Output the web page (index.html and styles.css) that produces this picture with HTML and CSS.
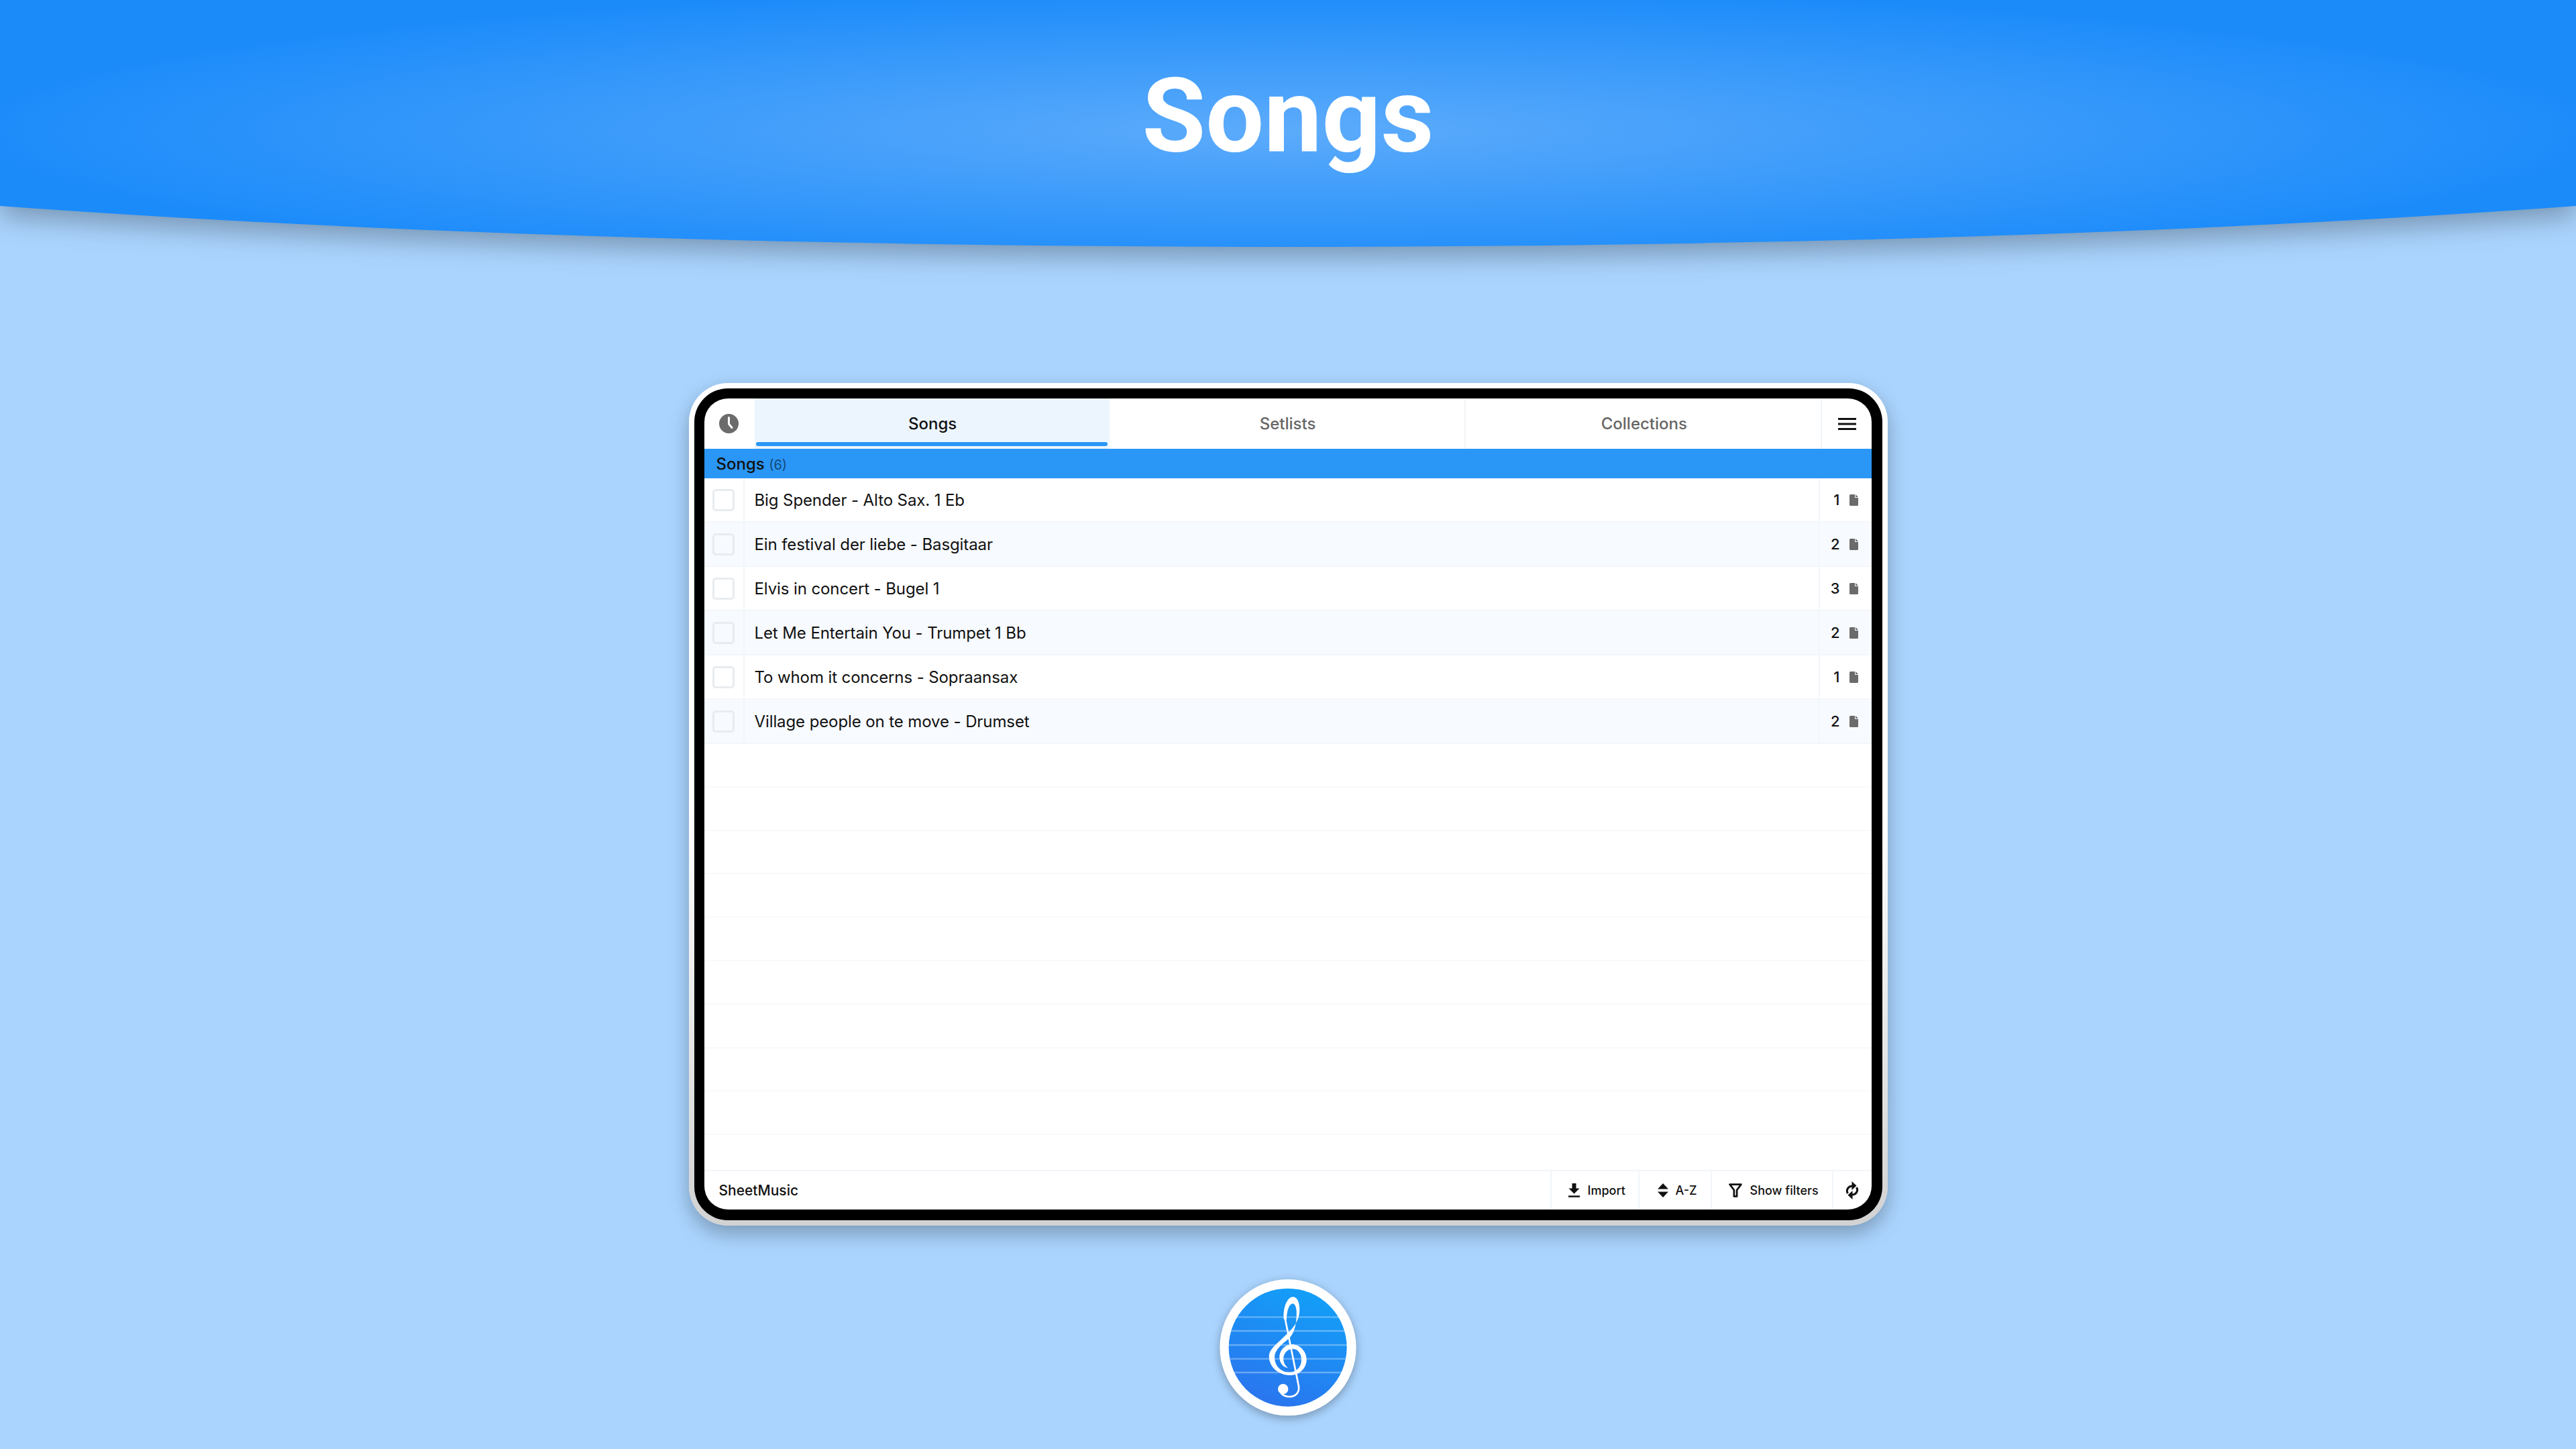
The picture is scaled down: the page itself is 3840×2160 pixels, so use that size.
FILE: index.html
```html
<!DOCTYPE html>
<html lang="en">
<head>
    <meta charset="UTF-8">
    <title>Songs</title>
    <link rel="stylesheet" href="styles.css">
</head>
<body>
    <svg class="sprites">
        <symbol id="file" viewBox="0 0 13 17"><path d="M1.5 0h6.500v5h5v10.500a1.500 1.500 0 0 1-1.500 1.500h-10a1.500 1.500 0 0 1-1.500-1.500v-14a1.500 1.500 0 0 1 1.500-1.500zM9 0l4 4h-4z"/></symbol>
    </svg>

    <header class="banner">
        <h1>Songs</h1>
    </header>

    <div class="tablet">
        <div class="bezel">
            <div class="screen">
                <nav class="tabs">
                    <div class="tab-clock">
                        <svg class="icon-clock" viewBox="0 0 29 29"><circle cx="14.500" cy="14.500" r="14.500" fill="#6b6b6b"/><path d="M14.500 5.500v9.500l4.500 5.500" fill="none" stroke="#fff" stroke-width="3" stroke-linecap="round" stroke-linejoin="round"/></svg>
                    </div>
                    <div class="tab active">Songs</div>
                    <div class="tab">Setlists</div>
                    <div class="tab">Collections</div>
                    <div class="tab-menu">
                        <svg class="icon-menu" viewBox="0 0 27 18"><path d="M0 1.500h27M0 9h27M0 16.500h27" stroke="#111" stroke-width="3"/></svg>
                    </div>
                </nav>

                <div class="band">Songs <span class="band-count">(6)</span></div>

                <div class="list">
                    <div class="row">
                        <div class="row-check"><span class="checkbox"></span></div>
                        <div class="row-name">Big Spender - Alto Sax. 1 Eb</div>
                        <div class="row-count">1 <svg class="icon-file"><use href="#file"/></svg></div>
                    </div>
                    <div class="row">
                        <div class="row-check"><span class="checkbox"></span></div>
                        <div class="row-name">Ein festival der liebe - Basgitaar</div>
                        <div class="row-count">2 <svg class="icon-file"><use href="#file"/></svg></div>
                    </div>
                    <div class="row">
                        <div class="row-check"><span class="checkbox"></span></div>
                        <div class="row-name">Elvis in concert - Bugel 1</div>
                        <div class="row-count">3 <svg class="icon-file"><use href="#file"/></svg></div>
                    </div>
                    <div class="row">
                        <div class="row-check"><span class="checkbox"></span></div>
                        <div class="row-name">Let Me Entertain You - Trumpet 1 Bb</div>
                        <div class="row-count">2 <svg class="icon-file"><use href="#file"/></svg></div>
                    </div>
                    <div class="row">
                        <div class="row-check"><span class="checkbox"></span></div>
                        <div class="row-name">To whom it concerns - Sopraansax</div>
                        <div class="row-count">1 <svg class="icon-file"><use href="#file"/></svg></div>
                    </div>
                    <div class="row">
                        <div class="row-check"><span class="checkbox"></span></div>
                        <div class="row-name">Village people on te move - Drumset</div>
                        <div class="row-count">2 <svg class="icon-file"><use href="#file"/></svg></div>
                    </div>
                    <div class="row-empty"></div>
                    <div class="row-empty"></div>
                    <div class="row-empty"></div>
                    <div class="row-empty"></div>
                    <div class="row-empty"></div>
                    <div class="row-empty"></div>
                    <div class="row-empty"></div>
                    <div class="row-empty"></div>
                    <div class="row-empty"></div>
                </div>

                <footer class="toolbar">
                    <div class="toolbar-name">SheetMusic</div>
                    <div class="tool tool-import">
                        <svg class="icon-import" viewBox="0 0 17 21"><path d="M5.500 0h6v7.500h5l-8 8-8-8h5z"/><path d="M0 19.500h17" stroke="#111" stroke-width="2.500"/></svg>
                        Import
                    </div>
                    <div class="tool tool-sort">
                        <svg class="icon-sort" viewBox="0 0 16 21"><path d="M8 0l8 8.500h-16zM8 21l-8-8.500h16z"/></svg>
                        A-Z
                    </div>
                    <div class="tool tool-filter">
                        <svg class="icon-filter" viewBox="0 0 19 20"><path d="M1.500 1.500h16l-6 8v9h-4v-9z" fill="none" stroke="#111" stroke-width="2.600" stroke-linejoin="round"/></svg>
                        Show filters
                    </div>
                    <div class="tool tool-sync">
                        <svg class="icon-sync" viewBox="0 0 20 27"><path d="M3.500 18c-3-5 .5-11 7-11M16.500 9c3 5-.5 11-7 11" fill="none" stroke="#111" stroke-width="3"/><path d="M9.500 0v13l7-6.500zM10.500 27v-13l-7 6.500z"/></svg>
                    </div>
                </footer>
            </div>
        </div>
    </div>

    <div class="logo">
        <svg viewBox="0 0 780 780">
            <defs>
                <linearGradient id="logo-fill" x1="0.7" y1="0" x2="0.3" y2="1">
                    <stop offset="0" stop-color="#12a0f8"/>
                    <stop offset="1" stop-color="#2b74ee"/>
                </linearGradient>
                <clipPath id="logo-clip"><circle cx="389" cy="386" r="264"/></clipPath>
            </defs>
            <circle cx="390" cy="386" r="305" fill="#fff"/>
            <circle cx="389" cy="386" r="264" fill="url(#logo-fill)"/>
            <g clip-path="url(#logo-clip)" stroke="#fff" stroke-opacity="0.32" stroke-width="7">
                <path d="M100 250h580M100 312h580M100 375h580M100 437h580M100 498h580"/>
            </g>
            <g fill="#fff">
                <path d="M372 262C365 215 385 160 412 160C435 160 445 195 441 232C436 280 400 312 365 345C330 378 305 398 305 425C305 475 350 510 400 510C445 510 473 475 473 440C473 400 440 372 408 372C375 372 352 400 352 430C352 455 368 475 390 478C375 465 368 450 370 430C372 410 390 392 410 392C435 392 450 415 450 440C450 475 425 497 395 497C360 497 330 470 330 430C330 395 365 370 395 345C420 322 430 275 428 225C427 205 420 190 412 190C395 190 384 225 384 262Z"/>
                <circle cx="368" cy="572" r="23"/>
            </g>
            <path d="M378 262L437 555C445 595 415 610 385 605C370 602 358 592 355 580" fill="none" stroke="#fff" stroke-width="8"/>
        </svg>
    </div>
</body>
</html>
```

FILE: styles.css
```css
* {
    box-sizing: border-box;
}
body {
    margin: 0;
    height: 2160px;
    overflow: hidden;
    background-color: #aad4fe;
    font-family: 'Inter', 'Liberation Sans', sans-serif;
    color: #111;
}
.sprites {
    display: none;
}
.banner {
    position: relative;
    height: 368px;
    padding-top: 89px;
    text-align: center;
    filter: drop-shadow(0 14px 20px rgba(0, 0, 0, 0.3));
}
.banner::before {
    content: '';
    position: absolute;
    top: 0;
    left: 0;
    width: 100%;
    height: 368px;
    background: radial-gradient(ellipse 2000px 215px at 50% 195px, #5cabfb 0%, #1b8bfa 100%);
    clip-path: ellipse(2880px 240px at 50% 128px);
}
.banner h1 {
    position: relative;
    margin: 0;
    font-family: 'Roboto', 'Liberation Sans', sans-serif;
    font-size: 154px;
    line-height: 170px;
    font-weight: 700;
    color: #fff;
}
.tablet {
    width: 1787px;
    height: 1256px;
    margin: 203px auto 0;
    padding: 8px;
    border-radius: 58px;
    background: linear-gradient(#fff, #fff 50%, #d2d2d2);
    box-shadow: 0 12px 30px rgba(0, 0, 0, 0.28);
}
.bezel {
    height: 100%;
    padding: 15px 16px 16px 15px;
    border-radius: 50px;
    background-color: #000;
}
.screen {
    display: flex;
    flex-direction: column;
    height: 100%;
    border-radius: 35px;
    overflow: hidden;
    background-color: #fff;
}
.tabs {
    display: flex;
    height: 75px;
    flex-shrink: 0;
}
.tab-clock {
    display: flex;
    align-items: center;
    justify-content: center;
    width: 75px;
    padding-right: 2px;
}
.icon-clock {
    width: 29px;
    height: 29px;
}
.tab {
    flex: 1;
    padding-top: 3px;
    padding-left: 2px;
    line-height: 69px;
    text-align: center;
    font-size: 24px;
    font-weight: 500;
    color: #666;
    border-right: 2px solid #f1f5f9;
}
.tab.active {
    color: #111;
    background-color: #ecf5fe;
    border-right: none;
    position: relative;
}
.tab.active::after {
    content: '';
    position: absolute;
    left: 2px;
    right: 3px;
    bottom: 4px;
    height: 6px;
    border-radius: 3px;
    background-color: #2a96f5;
}
.tab-menu {
    display: flex;
    align-items: center;
    justify-content: center;
    width: 73px;
    padding-left: 2px;
}
.icon-menu {
    width: 27px;
    height: 18px;
}
.band {
    height: 44px;
    flex-shrink: 0;
    padding-left: 18px;
    line-height: 46px;
    font-size: 24px;
    font-weight: 500;
    color: #111;
    background-color: #2a96f5;
}
.band-count {
    font-size: 20px;
    font-weight: 400;
    color: rgba(0, 0, 0, 0.55);
}
.list {
    flex: 1;
    overflow: hidden;
}
.row {
    display: flex;
    height: 66px;
    border-bottom: 2px solid #f3f6fa;
}
.row:nth-child(even) {
    background-color: #f7fafe;
}
.row-check {
    display: flex;
    align-items: center;
    justify-content: center;
    width: 60px;
    padding-right: 1px;
    border-right: 2px solid #f3f6fa;
}
.checkbox {
    width: 33px;
    height: 33px;
    border: 3px solid #e9ecef;
    border-radius: 5px;
}
.row-name {
    flex: 1;
    padding-left: 15px;
    padding-top: 1px;
    line-height: 64px;
    font-size: 24px;
    letter-spacing: -0.1px;
}
.row-count {
    display: flex;
    align-items: center;
    justify-content: flex-end;
    gap: 14px;
    width: 79px;
    padding-right: 20px;
    font-size: 22px;
    font-weight: 500;
    border-left: 2px solid #f3f6fa;
}
.icon-file {
    width: 13px;
    height: 17px;
    fill: #6b6b6b;
}
.row-empty {
    height: 64.8px;
    border-bottom: 2px solid #f7f9fc;
}
.toolbar {
    display: flex;
    height: 59px;
    flex-shrink: 0;
    border-top: 2px solid #f1f5f9;
    font-size: 18px;
    font-weight: 500;
}
.toolbar-name {
    flex: 1;
    padding-left: 22px;
    line-height: 58px;
    font-size: 21px;
}
.tool {
    display: flex;
    align-items: center;
    border-left: 2px solid #f1f5f9;
}
.tool-import {
    width: 131px;
    padding-left: 25px;
    gap: 12px;
}
.tool-sort {
    width: 108px;
    padding-left: 27px;
    gap: 11px;
}
.tool-filter {
    width: 181px;
    padding-left: 25px;
    gap: 12px;
}
.tool-sync {
    width: 59px;
    padding-left: 18px;
}
.icon-import {
    width: 17px;
    height: 21px;
    fill: #111;
}
.icon-sort {
    width: 16px;
    height: 21px;
    fill: #111;
}
.icon-filter {
    width: 20px;
    height: 21px;
}
.icon-sync {
    width: 20px;
    height: 27px;
    fill: #111;
}
.logo {
    width: 260px;
    height: 260px;
    margin: 53px auto 0;
}
.logo svg {
    display: block;
    width: 260px;
    height: 260px;
    overflow: visible;
    filter: drop-shadow(0 4px 7px rgba(0, 0, 0, 0.3));
}
```
